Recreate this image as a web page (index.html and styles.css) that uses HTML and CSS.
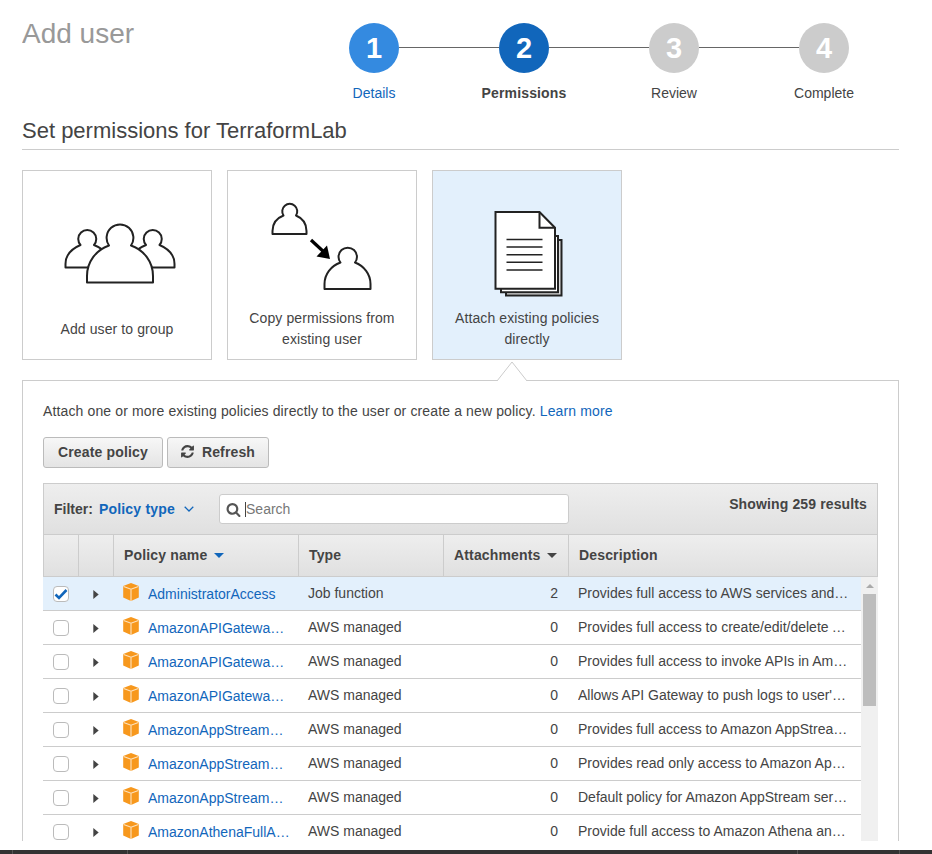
FILE: index.html
```html
<!DOCTYPE html>
<html lang="en">
<head>
    <meta charset="UTF-8">
    <meta name="viewport" content="width=device-width, initial-scale=1.0">
    <title>Add user</title>
    <link rel="stylesheet" href="styles.css">
</head>
<body>
    <svg class="icon-defs" width="0" height="0">
        <symbol id="cube" viewBox="0 0 16 18">
            <path fill="#f7981d" d="M8 0l7.8 3v11.4L8 18 .2 14.4V3z"/>
            <path fill="none" stroke="#fde3c0" stroke-width="1.1" d="M.6 3.4L8 6.2l7.4-2.8M8 6.2V18"/>
        </symbol>
        <symbol id="caret" viewBox="0 0 6 10">
            <path fill="#444" d="M0 0l6 5-6 5z"/>
        </symbol>
    </svg>

    <main class="page">
        <header class="top">
            <h1>Add user</h1>
            <div class="wizard">
                <div class="track">
                    <span class="dot dot-done">1</span>
                    <span class="line"></span>
                    <span class="dot dot-current">2</span>
                    <span class="line"></span>
                    <span class="dot">3</span>
                    <span class="line"></span>
                    <span class="dot">4</span>
                </div>
                <div class="labels">
                    <a class="label label-done">Details</a>
                    <span class="label label-current">Permissions</span>
                    <span class="label">Review</span>
                    <span class="label">Complete</span>
                </div>
            </div>
        </header>

        <h2>Set permissions for TerraformLab</h2>

        <div class="cards">
            <div class="card">
                <svg class="card-icon" viewBox="23 171 188 137">
                    <g fill="#fff" stroke="#222" stroke-width="2" stroke-linejoin="round">
                        <path d="M65.5 267.5V264C65.5 255 71 249 80.5 245A9 9 0 1 1 94 245C104 249 110 256 110 264V267.5Z"/>
                        <path d="M174.5 267.5V264C174.5 255 169 249 159.5 245A9 9 0 1 0 146 245C136 249 130 256 130 264V267.5Z"/>
                        <path d="M87 282.5V276C87 262 96 250 109 245.5A13.4 13.4 0 1 1 131 245.5C144 250 153 262 153 276V282.5Z"/>
                    </g>
                </svg>
                <div class="card-label">Add user to group</div>
            </div>
            <div class="card">
                <svg class="card-icon" viewBox="228 171 188 137">
                    <g fill="#fff" stroke="#222" stroke-width="2" stroke-linejoin="round">
                        <path d="M272.5 234V231C272.5 223 277 218 283.5 215.5A7.5 7.5 0 1 1 296 215.5C302 218 306.5 223 306.5 231V234Z"/>
                        <path d="M324.5 289V284C324.5 274 331 266 340.5 262.5A9.2 9.2 0 1 1 355 262.5C364 266 370.5 274 370.5 284V289Z"/>
                    </g>
                    <path fill="none" stroke="#000" stroke-width="3.2" d="M311 240L325 253"/>
                    <path fill="#000" d="M330 259L316.5 256.5L327 245.5Z"/>
                </svg>
                <div class="card-label">Copy permissions from existing user</div>
            </div>
            <div class="card card-selected">
                <svg class="card-icon" viewBox="433 171 188 137">
                    <g stroke="#222" stroke-width="2">
                        <path fill="#ddd" d="M506 295.5V240H561.5V295.5Z"/>
                        <path fill="#fff" d="M501 292.2V236H558V292.2Z"/>
                        <path fill="#fff" d="M495.5 288.8V212H539.5L555 227.7V288.8Z"/>
                        <path fill="none" d="M539.5 212V227.7H555"/>
                        <path fill="none" stroke-width="1.4" d="M506.5 239.5H542.5M506.5 247H542.5M506.5 254.7H542.5M506.5 262.3H542.5M506.5 270H542.5"/>
                    </g>
                </svg>
                <div class="card-label">Attach existing policies directly</div>
            </div>
        </div>

        <section class="panel">
            <svg class="panel-notch" width="32" height="21" viewBox="0 0 32 21">
                <path fill="#fff" stroke="#ccc" d="M1 20L16 1L31 20"/>
            </svg>

            <p class="intro">Attach one or more existing policies directly to the user or create a new policy. <a>Learn more</a></p>

            <div class="actions">
                <button type="button">Create policy</button>
                <button type="button" class="btn-refresh">
                    <svg width="15" height="15" viewBox="0 0 1792 1792"><path fill="#444" d="M1639 1056q0 5-1 7-64 268-268 434.5t-478 166.5q-146 0-282.5-55t-243.5-157l-129 129q-19 19-45 19t-45-19-19-45v-448q0-26 19-45t45-19h448q26 0 45 19t19 45-19 45l-137 137q71 66 161 102t187 36q134 0 250-65t186-179q11-17 53-117 8-23 30-23h192q13 0 22.5 9.5t9.5 22.5zm25-800v448q0 26-19 45t-45 19h-448q-26 0-45-19t-19-45 19-45l138-138q-148-137-349-137-134 0-250 65t-186 179q-11 17-53 117-8 23-30 23h-199q-13 0-22.5-9.5t-9.5-22.5v-7q65-268 270-434.5t480-166.5q146 0 284 55.5t245 156.5l130-129q19-19 45-19t45 19 19 45z"/></svg>
                    Refresh
                </button>
            </div>

            <div class="policies">
                <div class="filter-bar">
                    <span class="filter-label">Filter:</span>
                    <a class="filter-value">Policy type</a>
                    <svg class="chevron" width="10" height="6" viewBox="0 0 10 6"><path fill="none" stroke="#1166bb" stroke-width="1.3" d="M.7.7L5 5l4.3-4.3"/></svg>
                    <div class="search">
                        <svg width="15" height="15" viewBox="0 0 1792 1792"><path fill="#555" d="M1216 832q0-185-131.5-316.5t-316.5-131.5-316.5 131.5-131.5 316.5 131.5 316.5 316.5 131.5 316.5-131.5 131.5-316.5zm512 832q0 52-38 90t-90 38q-54 0-90-38l-343-342q-179 124-399 124-143 0-273.5-55.5t-225-150-150-225-55.5-273.5 55.5-273.5 150-225 225-150 273.5-55.5 273.5 55.5 225 150 150 225 55.5 273.5q0 220-124 399l343 343q37 37 37 90z"/></svg>
                        <span class="search-text">Search</span>
                    </div>
                    <span class="results">Showing 259 results</span>
                </div>

                <div class="row head">
                    <div class="cell"></div>
                    <div class="cell"></div>
                    <div class="cell cell-name">Policy name <span class="sort sort-active"></span></div>
                    <div class="cell">Type</div>
                    <div class="cell">Attachments <span class="sort"></span></div>
                    <div class="cell">Description</div>
                </div>

                <div class="table-body">
                    <div class="rows">
                        <div class="row row-selected">
                            <div class="cell cell-check"><span class="check"><svg width="14" height="12" viewBox="0 0 14 12"><path fill="none" stroke="#1166bb" stroke-width="2.6" d="M1.5 6.5L5 10l7.5-8"/></svg></span></div>
                            <div class="cell cell-caret"><svg width="6" height="9"><use href="#caret"/></svg></div>
                            <div class="cell cell-policy"><svg class="cube" width="16" height="18"><use href="#cube"/></svg><a class="policy-link">AdministratorAccess</a></div>
                            <div class="cell">Job function</div>
                            <div class="cell cell-num">2</div>
                            <div class="cell cell-desc"><span>Provides full access to AWS services and resources.</span></div>
                        </div>
                        <div class="row">
                            <div class="cell cell-check"><span class="check"></span></div>
                            <div class="cell cell-caret"><svg width="6" height="9"><use href="#caret"/></svg></div>
                            <div class="cell cell-policy"><svg class="cube" width="16" height="18"><use href="#cube"/></svg><a class="policy-link">AmazonAPIGatewayAdministrator</a></div>
                            <div class="cell">AWS managed</div>
                            <div class="cell cell-num">0</div>
                            <div class="cell cell-desc"><span>Provides full access to create/edit/delete APIs in Amazon API Gateway</span></div>
                        </div>
                        <div class="row">
                            <div class="cell cell-check"><span class="check"></span></div>
                            <div class="cell cell-caret"><svg width="6" height="9"><use href="#caret"/></svg></div>
                            <div class="cell cell-policy"><svg class="cube" width="16" height="18"><use href="#cube"/></svg><a class="policy-link">AmazonAPIGatewayInvokeFullAccess</a></div>
                            <div class="cell">AWS managed</div>
                            <div class="cell cell-num">0</div>
                            <div class="cell cell-desc"><span>Provides full access to invoke APIs in Amazon API Gateway.</span></div>
                        </div>
                        <div class="row">
                            <div class="cell cell-check"><span class="check"></span></div>
                            <div class="cell cell-caret"><svg width="6" height="9"><use href="#caret"/></svg></div>
                            <div class="cell cell-policy"><svg class="cube" width="16" height="18"><use href="#cube"/></svg><a class="policy-link">AmazonAPIGatewayPushToCloudWatchLogs</a></div>
                            <div class="cell">AWS managed</div>
                            <div class="cell cell-num">0</div>
                            <div class="cell cell-desc"><span>Allows API Gateway to push logs to user's account.</span></div>
                        </div>
                        <div class="row">
                            <div class="cell cell-check"><span class="check"></span></div>
                            <div class="cell cell-caret"><svg width="6" height="9"><use href="#caret"/></svg></div>
                            <div class="cell cell-policy"><svg class="cube" width="16" height="18"><use href="#cube"/></svg><a class="policy-link">AmazonAppStreamFullAccess</a></div>
                            <div class="cell">AWS managed</div>
                            <div class="cell cell-num">0</div>
                            <div class="cell cell-desc"><span>Provides full access to Amazon AppStream via the AWS Console.</span></div>
                        </div>
                        <div class="row">
                            <div class="cell cell-check"><span class="check"></span></div>
                            <div class="cell cell-caret"><svg width="6" height="9"><use href="#caret"/></svg></div>
                            <div class="cell cell-policy"><svg class="cube" width="16" height="18"><use href="#cube"/></svg><a class="policy-link">AmazonAppStreamReadOnlyAccess</a></div>
                            <div class="cell">AWS managed</div>
                            <div class="cell cell-num">0</div>
                            <div class="cell cell-desc"><span>Provides read only access to Amazon AppStream via the AWS Console.</span></div>
                        </div>
                        <div class="row">
                            <div class="cell cell-check"><span class="check"></span></div>
                            <div class="cell cell-caret"><svg width="6" height="9"><use href="#caret"/></svg></div>
                            <div class="cell cell-policy"><svg class="cube" width="16" height="18"><use href="#cube"/></svg><a class="policy-link">AmazonAppStreamServiceAccess</a></div>
                            <div class="cell">AWS managed</div>
                            <div class="cell cell-num">0</div>
                            <div class="cell cell-desc"><span>Default policy for Amazon AppStream service role.</span></div>
                        </div>
                        <div class="row">
                            <div class="cell cell-check"><span class="check"></span></div>
                            <div class="cell cell-caret"><svg width="6" height="9"><use href="#caret"/></svg></div>
                            <div class="cell cell-policy"><svg class="cube" width="16" height="18"><use href="#cube"/></svg><a class="policy-link">AmazonAthenaFullAccess</a></div>
                            <div class="cell">AWS managed</div>
                            <div class="cell cell-num">0</div>
                            <div class="cell cell-desc"><span>Provide full access to Amazon Athena and scoped access to the dependencies.</span></div>
                        </div>
                    </div>
                    <div class="scrollbar">
                        <span class="scroll-up"></span>
                        <span class="scroll-thumb"></span>
                    </div>
                </div>
            </div>
        </section>
    </main>

    <footer class="bottom-bar">
        <span class="seg seg-a"></span>
        <span class="seg seg-b"></span>
        <span class="seg seg-c"></span>
        <span class="seg seg-d"></span>
    </footer>
</body>
</html>
```

FILE: styles.css
```css
* {
    box-sizing: border-box;
}

html, body {
    height: 854px;
    overflow: hidden;
}

body {
    margin: 0;
    background-color: #fff;
    color: #444;
    font-family: "Liberation Sans", Arial, sans-serif;
    font-size: 14px;
}

a {
    color: #1166bb;
}

.icon-defs {
    display: block;
    height: 0;
}

.page {
    height: 841px;
    margin: 0 33px 9px 22px;
    overflow: hidden;
}

/* header and wizard */
.top {
    display: flex;
    justify-content: space-between;
    height: 110px;
    padding-top: 23px;
}

h1 {
    margin: -6px 0 0;
    color: #999;
    font-size: 28px;
    font-weight: 400;
    line-height: 34px;
}

.wizard {
    width: 600px;
}

.track {
    display: flex;
    align-items: center;
    padding: 0 50px;
}

.dot {
    display: flex;
    align-items: center;
    justify-content: center;
    width: 50px;
    height: 50px;
    border-radius: 50%;
    background-color: #ccc;
    color: #fff;
    font-size: 29px;
    font-weight: 700;
}

.dot-done {
    background-color: #348ae0;
}

.dot-current {
    background-color: #1166bb;
}

.line {
    width: 100px;
    height: 1px;
    margin-top: -1px;
    background-color: #666;
}

.labels {
    display: flex;
    margin-top: 12px;
}

.label {
    width: 150px;
    line-height: 16px;
    text-align: center;
}

.label-current {
    font-weight: 700;
    letter-spacing: .15px;
}

h2 {
    height: 40px;
    margin: 0 0 20px;
    border-bottom: 1px solid #ccc;
    font-size: 22px;
    font-weight: 400;
    line-height: 42px;
}

/* option cards */
.cards {
    display: flex;
    gap: 15px;
}

.card {
    width: 190px;
    height: 190px;
    border: 1px solid #ccc;
}

.card-selected {
    background-color: #e3f0fc;
}

.card-icon {
    display: block;
    width: 188px;
    height: 137px;
}

.card-label {
    display: flex;
    align-items: center;
    justify-content: center;
    height: 42px;
    padding: 0 10px;
    letter-spacing: .1px;
    line-height: 21px;
    text-align: center;
}

/* panel below the cards */
.panel {
    position: relative;
    height: 461px;
    margin-top: 20px;
    padding: 20px 20px 0;
    border: 1px solid #ccc;
    border-bottom: 0;
}

.panel-notch {
    position: absolute;
    top: -20px;
    left: 473px;
}

.intro {
    margin: 0;
    letter-spacing: .13px;
    line-height: 20px;
}

.actions {
    display: flex;
    gap: 4px;
    margin-top: 16px;
}

button {
    display: flex;
    align-items: center;
    gap: 6px;
    height: 31px;
    padding: 0 14px 2px;
    border: 1px solid #bbb;
    border-radius: 3px;
    background: linear-gradient(#f7f7f7, #e4e4e4);
    color: #444;
    font-family: inherit;
    font-size: 14px;
    font-weight: 700;
    letter-spacing: .15px;
}

.btn-refresh {
    gap: 7px;
    padding: 0 13px 2px 12px;
}

.policies {
    margin-top: 15px;
}

.filter-bar {
    display: flex;
    align-items: center;
    height: 52px;
    padding: 0 10px;
    border: 1px solid #ccc;
    background: linear-gradient(#eee, #e0e0e0);
}

.filter-label {
    font-weight: 700;
}

.filter-value {
    margin-left: 6px;
    font-weight: 700;
    letter-spacing: .2px;
}

.chevron {
    margin-left: 9px;
}

.search {
    display: flex;
    align-items: center;
    gap: 4px;
    width: 350px;
    height: 30px;
    margin-left: 25px;
    padding-left: 6px;
    border: 1px solid #ccc;
    border-radius: 3px;
    background-color: #fff;
}

.search-text {
    border-left: 1px solid #444;
    color: #777;
    line-height: 15px;
}

.results {
    align-self: flex-start;
    margin-left: auto;
    padding-top: 12px;
    font-weight: 700;
    letter-spacing: .13px;
}

/* policy table */
.row {
    display: grid;
    grid-template-columns: 35px 35px 185px 145px 125px 1fr;
    height: 34px;
    border-bottom: 1px solid #ccc;
    line-height: 32px;
}

.row-selected {
    background-color: #e3f0fc;
}

.head {
    grid-template-columns: 34px 35px 185px 145px 125px 1fr;
    height: 42px;
    border-right: 1px solid #ccc;
    border-left: 1px solid #ccc;
    background: linear-gradient(#eee, #e0e0e0);
    font-weight: 700;
    letter-spacing: .15px;
    line-height: 40px;
}

.head .cell + .cell {
    border-left: 1px solid #ccc;
}

.cell {
    min-width: 0;
    padding: 0 10px;
    white-space: nowrap;
}

.sort {
    display: inline-block;
    margin-left: 3px;
    border-top: 5px solid #444;
    border-right: 5px solid transparent;
    border-left: 5px solid transparent;
    vertical-align: 2px;
}

.sort-active {
    border-top-color: #1166bb;
}

.cell-check {
    display: flex;
    align-items: center;
    justify-content: center;
    padding: 0;
}

.check {
    display: flex;
    align-items: center;
    justify-content: center;
    width: 16px;
    height: 16px;
    border: 1px solid #bbb;
    border-radius: 4px;
    background-color: #fff;
}

.cell-caret {
    display: flex;
    align-items: center;
    justify-content: center;
    padding: 0 0 0 1px;
}

.cell-policy {
    display: flex;
    align-items: flex-start;
    gap: 9px;
    padding-right: 7.5px;
}

.cube {
    flex: none;
    margin-top: 6px;
}

.policy-link {
    min-width: 0;
    overflow: hidden;
    line-height: 34px;
    text-overflow: ellipsis;
}

.cell-num {
    text-align: right;
}

.cell-desc {
    overflow: hidden;
}

.cell-desc span {
    display: block;
    overflow: hidden;
    text-overflow: ellipsis;
}

.table-body {
    display: flex;
    height: 264px;
    overflow: hidden;
}

.rows {
    flex: 1;
    min-width: 0;
}

.scrollbar {
    display: flex;
    flex-direction: column;
    align-items: center;
    width: 17px;
    padding-top: 7px;
    background-color: #f0f0f0;
}

.scroll-up {
    width: 0;
    height: 0;
    border-right: 4px solid transparent;
    border-bottom: 4px solid #aaa;
    border-left: 4px solid transparent;
}

.scroll-thumb {
    width: 13px;
    height: 112px;
    margin-top: 6px;
    background-color: #bdbdbd;
}

/* dark strip at the bottom of the window */
.bottom-bar {
    display: flex;
    height: 4px;
    background-color: #333;
}

.seg {
    border-right: 1px solid #555;
}

.seg-a {
    width: 13px;
}

.seg-b {
    width: 115px;
}

.seg-c {
    width: 670px;
}

.seg-d {
    width: 102px;
}
```
